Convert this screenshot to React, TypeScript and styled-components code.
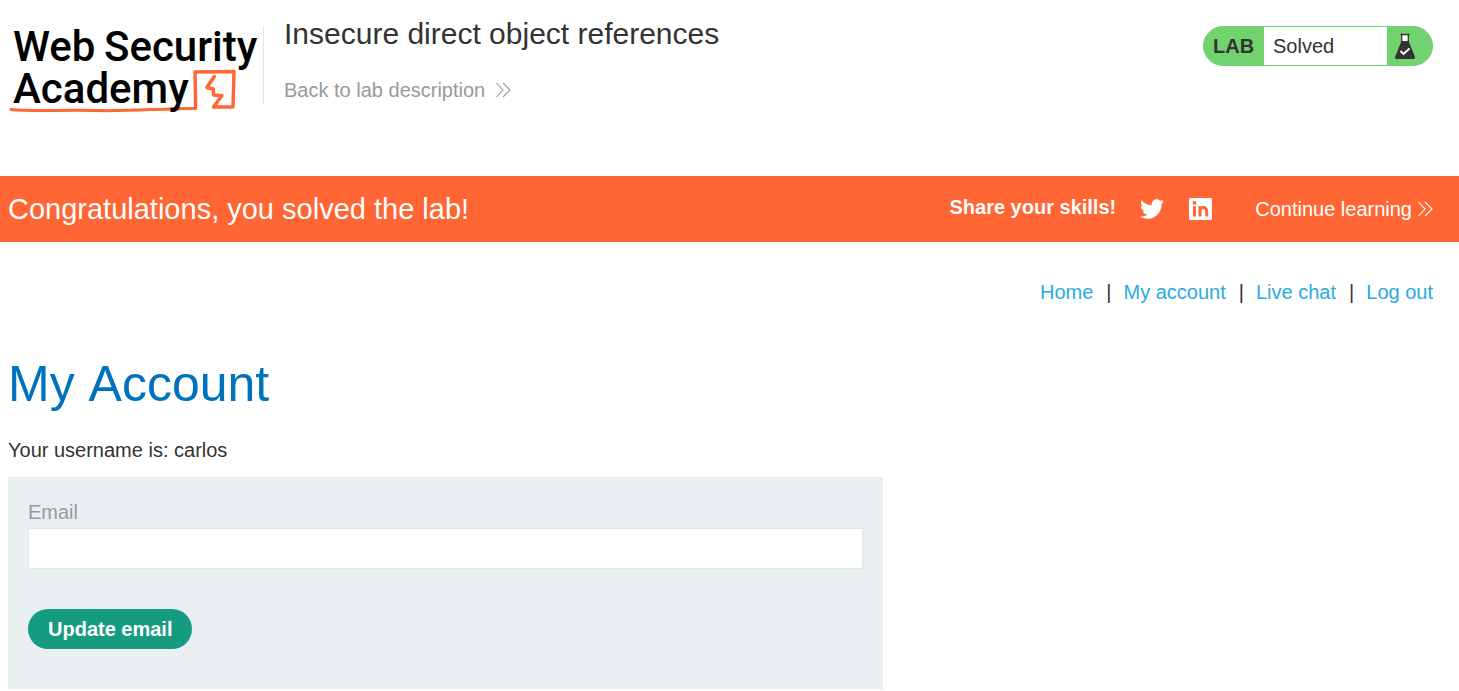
import React from "react";
import styled, { createGlobalStyle } from "styled-components";
import { FaTwitter } from "react-icons/fa";

const GlobalStyle = createGlobalStyle`
  * { box-sizing: border-box; }
  body {
    margin: 0;
    background: #ffffff;
    color: #333332;
    font-family: "Liberation Sans", Arial, sans-serif;
    font-size: 20px;
    line-height: 24px;
  }
  h1, h2, p { margin: 0; font-weight: 400; }
  a { color: inherit; text-decoration: none; }
`;

const Header = styled.header`
  display: flex;
  align-items: flex-start;
  padding: 16px 26px 60px 8px;
`;

const LogoLink = styled.a`
  flex: none;
  width: 255px;
  height: 100px;
`;

const LogoText = styled.text`
  font-family: Roboto, sans-serif;
  font-size: 42px;
  font-weight: 500;
  fill: #000000;
`;

const TitleBlock = styled.div`
  display: flex;
  flex-direction: column;
  align-items: flex-start;
  flex: 1;
  height: 78px;
  margin-top: 10px;
  padding-left: 20px;
  border-left: 1px solid #e5e5e5;
`;

const LabTitle = styled.h2`
  font-size: 30px;
  line-height: 36px;
  margin-top: -10px;
`;

const ArrowLink = styled.a<{ $gap: number }>`
  display: inline-flex;
  align-items: center;
  gap: ${(p) => p.$gap}px;
`;

const BackLink = styled(ArrowLink)`
  margin-top: 26px;
  color: #999999;
`;

const Badge = styled.div`
  display: flex;
  flex: none;
  width: 230px;
  height: 40px;
  margin-top: 10px;
  border: 1px solid #72d26e;
  border-radius: 20px;
  background: #72d26e;
  overflow: hidden;
  line-height: 38px;
`;

const BadgeLabel = styled.span`
  width: 60px;
  padding-left: 9px;
  font-weight: 700;
`;

const BadgeStatus = styled.span`
  flex: 1;
  padding-left: 9px;
  background: #ffffff;
`;

const BadgeIcon = styled.span`
  display: flex;
  align-items: center;
  width: 45px;
  padding-left: 7px;
`;

const Banner = styled.section`
  display: flex;
  align-items: center;
  justify-content: space-between;
  height: 66px;
  padding: 0 26px 0 8px;
  background: #ff6633;
  color: #ffffff;
`;

const BannerMessage = styled.p`
  font-size: 29px;
  line-height: 36px;
`;

const BannerActions = styled.div`
  display: flex;
  align-items: center;
  gap: 24px;
`;

const ShareLabel = styled.span`
  font-weight: 700;
  padding-bottom: 4px;
`;

const SocialLink = styled.a`
  display: flex;
`;

const ContinueLink = styled(ArrowLink)`
  margin-left: 18px;
`;

const Content = styled.main`
  padding: 38px 26px 2px 8px;
`;

const Nav = styled.nav`
  display: flex;
  justify-content: flex-end;
  gap: 12px;
`;

const Separator = styled.span`
  padding-left: 1px;
`;

const NavLink = styled.a`
  color: #29abe2;
`;

const PageTitle = styled.h1`
  margin-top: 50px;
  color: #0071bc;
  font-size: 50px;
  line-height: 60px;
  font-kerning: none;
`;

const Username = styled.p`
  margin-top: 24px;
`;

const AccountForm = styled.form`
  display: flex;
  flex-direction: column;
  align-items: flex-start;
  max-width: 875px;
  margin-top: 15px;
  padding: 23px 20px 40px;
  background: #eaeff2;
`;

const FieldLabel = styled.label`
  color: #999999;
`;

const TextField = styled.input`
  width: 100%;
  height: 41px;
  margin-top: 4px;
  padding: 0 10px;
  border: 1px solid #e5e5e5;
  border-radius: 0;
  background: #ffffff;
  font: inherit;
  color: inherit;
`;

const SubmitButton = styled.button`
  height: 40px;
  margin-top: 40px;
  padding: 0 20px;
  border: 0;
  border-radius: 20px;
  background: #159c80;
  color: #ffffff;
  font: inherit;
  font-weight: 700;
  cursor: pointer;
`;

const DoubleChevron = () => (
  <svg width="16" height="18" viewBox="0 0 16 18" fill="none" stroke="currentColor" strokeWidth="1.1" aria-hidden="true">
    <path d="M1.500 2 8 9 1.500 16M8 2l7 7-7 7" />
  </svg>
);

const Logo = () => (
  <svg width="255" height="100" viewBox="8 16 255 100" role="img" aria-label="Web Security Academy">
    <LogoText x="13" y="61">Web</LogoText>
    <LogoText x="104" y="61">Security</LogoText>
    <g fill="none" stroke="#ff6633" strokeLinejoin="round" strokeLinecap="round">
      <path d="M11 109.500C35 112 60 109.500 95 110.500S160 108.500 195 108.500" strokeWidth="3" />
      <path d="M195.700 108 195 72 234 71.500 233 107 213.500 107 222 95.500 213.500 95 213.300 89 206.800 87.500 214.300 76.500" strokeWidth="3.400" />
    </g>
    <LogoText x="13" y="103">Academy</LogoText>
  </svg>
);

const LinkedIn = () => (
  <svg width="25" height="24" viewBox="0 0 25 24" aria-hidden="true">
    <rect x="1" y="1" width="23" height="22" rx="1.500" fill="#ffffff" />
    <path d="M6.500 9.300V19.500M12 19.500V9.300M12 14.500c0-5.200 6.800-5.200 6.800 0V19.500" fill="none" stroke="#ff6633" strokeWidth="3" />
    <circle cx="6.500" cy="5.900" r="1.900" fill="#ff6633" />
  </svg>
);

const Flask = () => (
  <svg width="22" height="28" viewBox="0 0 22 28" aria-hidden="true">
    <path d="M7 3h8v7H7z" fill="#ffffff" />
    <path d="M6.500 2.500h9M7.700 3v7M14.300 3v7" fill="none" stroke="#333332" strokeWidth="1.300" />
    <path d="M7.500 9h7L21 25q.5 2-1.500 2h-17Q.5 27 1 25Z" fill="#333332" />
    <path d="m6.500 19 3 3 6-5.500" fill="none" stroke="#ffffff" strokeWidth="1.800" />
  </svg>
);

const navItems = ["Home", "My account", "Live chat", "Log out"];

export default function App() {
  return (
    <>
      <GlobalStyle />
      <Header>
        <LogoLink href="#academy">
          <Logo />
        </LogoLink>
        <TitleBlock>
          <LabTitle>Insecure direct object references</LabTitle>
          <BackLink href="#description" $gap={10}>
            Back to lab description
            <DoubleChevron />
          </BackLink>
        </TitleBlock>
        <Badge>
          <BadgeLabel>LAB</BadgeLabel>
          <BadgeStatus>Solved</BadgeStatus>
          <BadgeIcon>
            <Flask />
          </BadgeIcon>
        </Badge>
      </Header>
      <Banner>
        <BannerMessage>Congratulations, you solved the lab!</BannerMessage>
        <BannerActions>
          <ShareLabel>Share your skills!</ShareLabel>
          <SocialLink href="#twitter" aria-label="Share on Twitter">
            <FaTwitter size={24} />
          </SocialLink>
          <SocialLink href="#linkedin" aria-label="Share on LinkedIn">
            <LinkedIn />
          </SocialLink>
          <ContinueLink href="#continue" $gap={5}>
            Continue learning
            <DoubleChevron />
          </ContinueLink>
        </BannerActions>
      </Banner>
      <Content>
        <Nav>
          {navItems.map((item, i) => (
            <React.Fragment key={item}>
              {i > 0 && <Separator>|</Separator>}
              <NavLink href="#">{item}</NavLink>
            </React.Fragment>
          ))}
        </Nav>
        <PageTitle>My Account</PageTitle>
        <Username>Your username is: carlos</Username>
        <AccountForm onSubmit={(e) => e.preventDefault()}>
          <FieldLabel htmlFor="email">Email</FieldLabel>
          <TextField id="email" type="email" />
          <SubmitButton type="submit">Update email</SubmitButton>
        </AccountForm>
      </Content>
    </>
  );
}
